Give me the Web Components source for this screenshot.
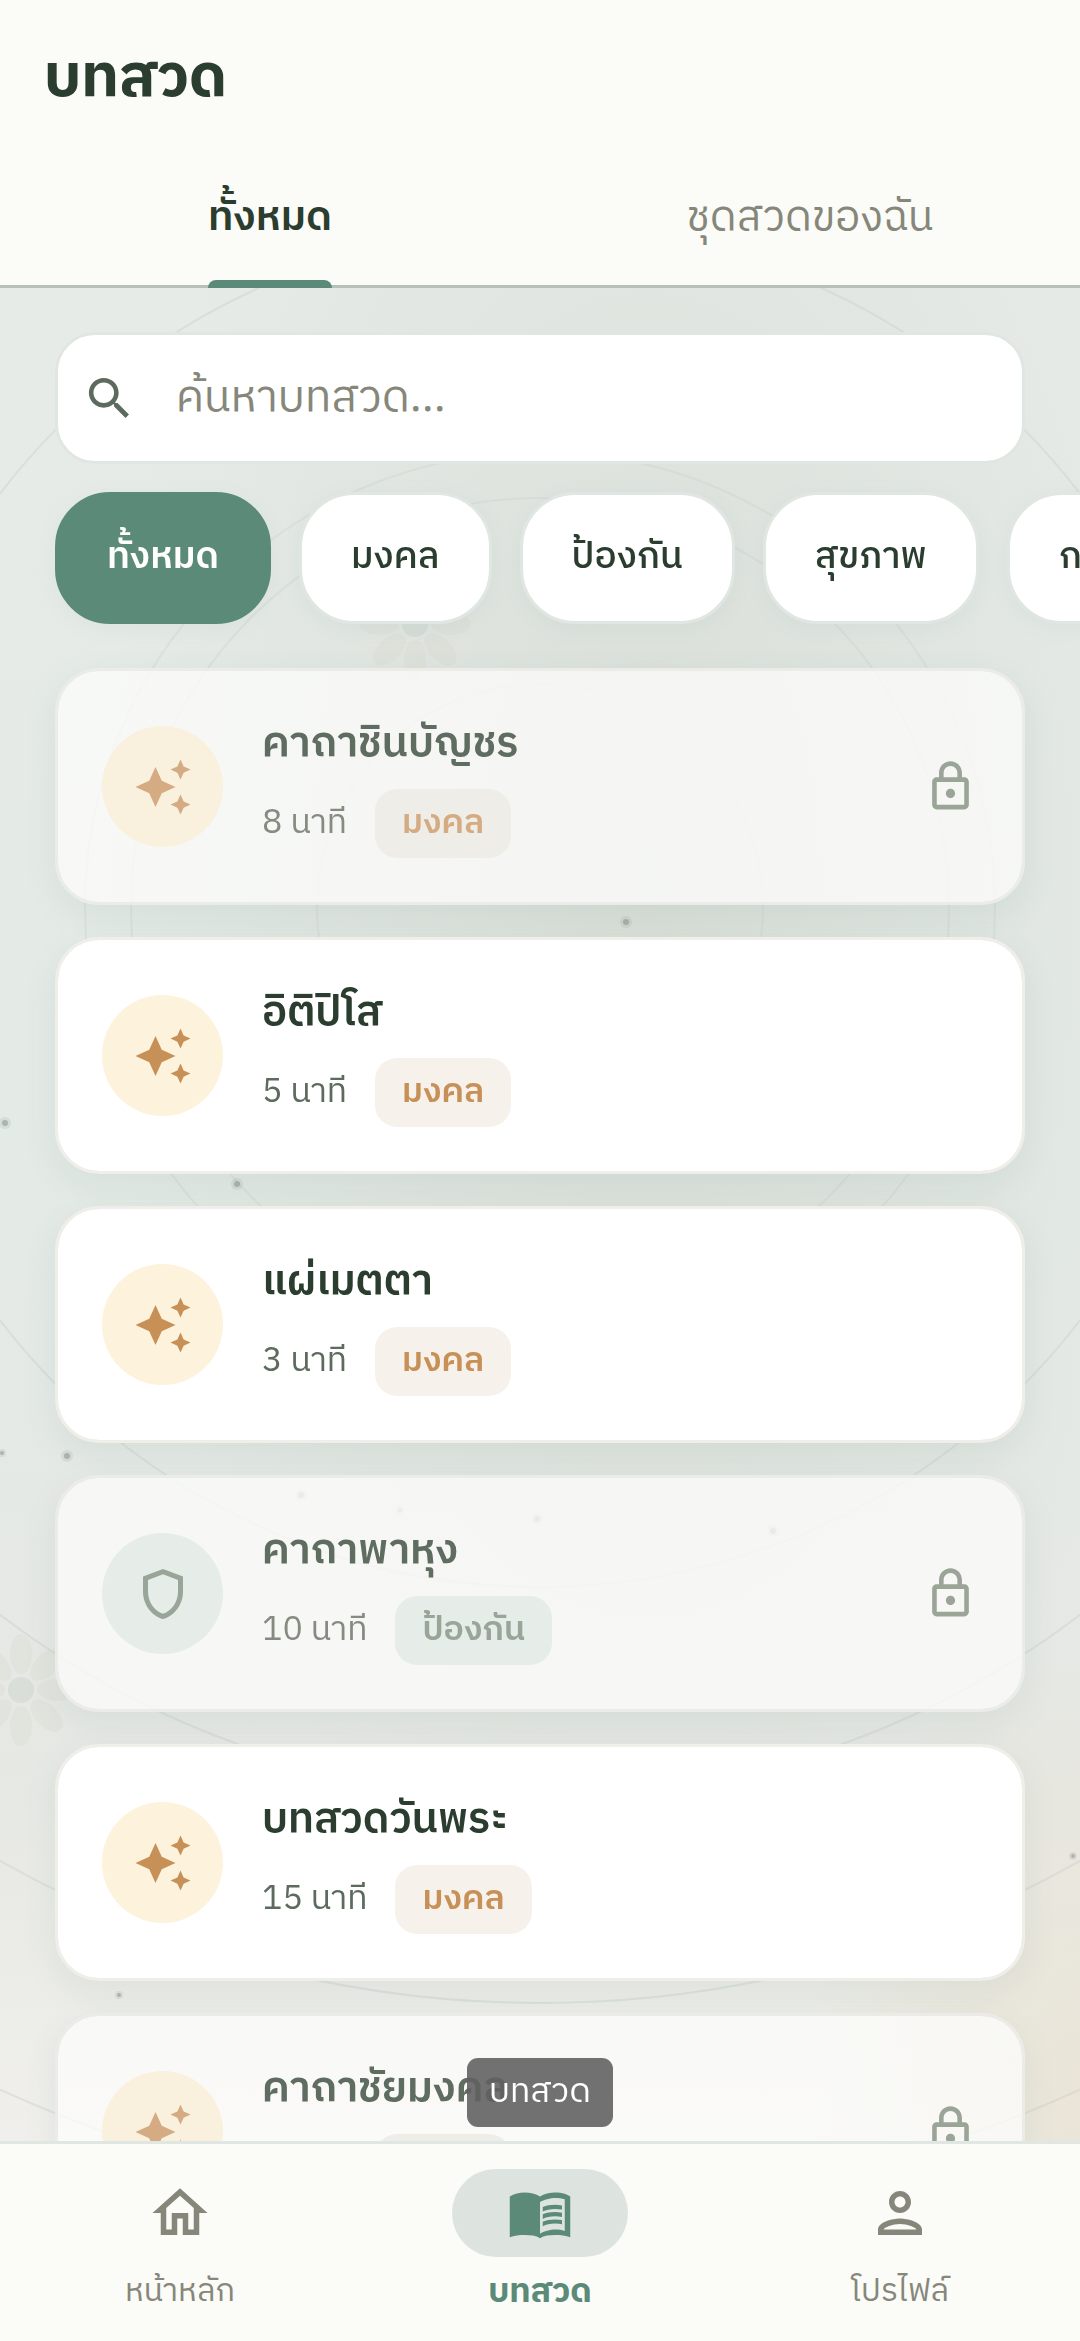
<!DOCTYPE html>
<html lang="th">
<head>
<meta charset="utf-8">
<meta name="viewport" content="width=device-width, initial-scale=1">
<title>บทสวด</title>
<style>
    :root {
        --ink: #2a3d2e;
        --ink-soft: #5c6b5e;
        --muted: #86877a;
        --primary: #5b8b78;
        --primary-soft: #dde4df;
        --surface: #fbfbf7;
        --line: #e0e6e1;
        --gold: #c79057;
        --gold-soft: #fdf2dc;
        --text-sm: 34px;
        --text-md: 37px;
        --text-lg: 42px;
        --space-sm: 28px;
        --space-md: 44px;
        --gutter: 55px;
    }
    body {
        margin: 0;
        color: var(--ink);
        background: var(--surface);
        font-family: "IBM Plex Sans Thai", "Noto Sans Thai", "Noto Sans", sans-serif;
    }
</style>
</head>
<body>
<chant-app>
    <page-header slot="header">บทสวด</page-header>
    <view-tabs slot="header">
        <view-tab selected>ทั้งหมด</view-tab>
        <view-tab>ชุดสวดของฉัน</view-tab>
    </view-tabs>

    <search-field placeholder="ค้นหาบทสวด..."></search-field>
    <chip-row>
        <filter-chip selected>ทั้งหมด</filter-chip>
        <filter-chip>มงคล</filter-chip>
        <filter-chip>ป้องกัน</filter-chip>
        <filter-chip>สุขภาพ</filter-chip>
        <filter-chip>การงาน</filter-chip>
    </chip-row>
    <chant-list>
        <chant-card minutes="8" category="มงคล" locked>คาถาชินบัญชร</chant-card>
        <chant-card minutes="5" category="มงคล">อิติปิโส</chant-card>
        <chant-card minutes="3" category="มงคล">แผ่เมตตา</chant-card>
        <chant-card minutes="10" category="ป้องกัน" kind="shield" locked>คาถาพาหุง</chant-card>
        <chant-card minutes="15" category="มงคล">บทสวดวันพระ</chant-card>
        <chant-card minutes="5" category="มงคล" locked>คาถาชัยมงคล</chant-card>
    </chant-list>

    <bottom-nav slot="nav">
        <nav-item icon="home" href="#home">หน้าหลัก</nav-item>
        <nav-item icon="book" href="#chants" tooltip="บทสวด" selected>บทสวด</nav-item>
        <nav-item icon="person" href="#profile">โปรไฟล์</nav-item>
    </bottom-nav>
</chant-app>

<script>
const ICONS = {
    search: 'M15.5 14h-.79l-.28-.27C15.41 12.59 16 11.11 16 9.5 16 5.91 13.09 3 9.5 3S3 5.91 3 9.5 5.91 16 9.5 16c1.61 0 3.09-.59 4.23-1.57l.27.28v.79l5 4.99L20.49 19l-4.99-5zm-6 0C7.01 14 5 11.99 5 9.5S7.01 5 9.5 5 14 7.01 14 9.5 11.99 14 9.5 14z',
    sparkle: 'M19 9l1.25-2.75L23 5l-2.75-1.25L19 1l-1.25 2.75L15 5l2.75 1.25L19 9zm-7.5.5L9 4 6.5 9.5 1 12l5.5 2.5L9 20l2.5-5.5L17 12l-5.5-2.5zM19 15l-1.25 2.75L15 19l2.75 1.25L19 23l1.25-2.75L23 19l-2.75-1.25L19 15z',
    shield: 'M12 2L4 5v6.09c0 5.05 3.41 9.76 8 10.91 4.59-1.15 8-5.86 8-10.91V5l-8-3zm6 9.09c0 4-2.55 7.7-6 8.83-3.45-1.13-6-4.82-6-8.83v-4.7l6-2.25 6 2.25v4.7z',
    lock: 'M18 8h-1V6c0-2.76-2.24-5-5-5S7 3.24 7 6v2H6c-1.1 0-2 .9-2 2v10c0 1.1.9 2 2 2h12c1.1 0 2-.9 2-2V10c0-1.1-.9-2-2-2zM9 6c0-1.66 1.34-3 3-3s3 1.34 3 3v2H9V6zm9 14H6V10h12v10zm-6-3c1.1 0 2-.9 2-2s-.9-2-2-2-2 .9-2 2 .9 2 2 2z',
    home: 'M12 5.69l5 4.5V18h-2v-6H9v6H7v-7.81l5-4.5M12 3L2 12h3v8h6v-6h2v6h6v-8h3L12 3z',
    book: 'M21 5c-1.11-.35-2.33-.5-3.5-.5-1.95 0-4.05.4-5.5 1.5-1.45-1.1-3.55-1.5-5.5-1.5S2.45 4.9 1 6v14.8C2.6 20.2 4.6 20 6.5 20c1.95 0 4.05.2 5.5 1.2 1.45-1 3.55-1.2 5.5-1.2 1.9 0 3.9.2 5.5.8V6c-.6-.45-1.25-.75-2-1zM21 18.5c-1.1-.35-2.3-.5-3.5-.5-1.7 0-4.15.65-5.5 1.5V8c1.35-.85 3.8-1.5 5.5-1.5 1.2 0 2.4.15 3.5.5v11.5zM17.5 10.5c.88 0 1.73.09 2.5.26V9.24c-.79-.15-1.64-.24-2.5-.24-1.7 0-3.24.29-4.5.83v1.66c1.13-.64 2.7-.99 4.5-.99zM13 12.49v1.66c1.13-.64 2.7-.99 4.5-.99.88 0 1.73.09 2.5.26V11.9c-.79-.15-1.64-.24-2.5-.24-1.7 0-3.24.3-4.5.83zM17.5 14.33c-1.7 0-3.24.29-4.5.83v1.66c1.13-.64 2.7-.99 4.5-.99.88 0 1.73.09 2.5.26v-1.52c-.79-.16-1.64-.24-2.5-.24z',
    person: 'M12 6c1.1 0 2 .9 2 2s-.9 2-2 2-2-.9-2-2 .9-2 2-2m0 10c2.7 0 5.8 1.29 6 2H6c.23-.72 3.31-2 6-2m0-12C9.79 4 8 5.79 8 8s1.79 4 4 4 4-1.79 4-4-1.79-4-4-4zm0 10c-2.67 0-8 1.34-8 4v2h16v-2c0-2.66-5.33-4-8-4z'
};

class AppIcon extends HTMLElement {
    constructor() {
        super();
        this.attachShadow({ mode: 'open' });
    }

    connectedCallback() {
        this.shadowRoot.innerHTML = `
            <style>
                :host {
                    display: block;
                    flex: none;
                    width: var(--icon-size, 55px);
                    height: var(--icon-size, 55px);
                }
                svg {
                    display: block;
                    width: 100%;
                    height: 100%;
                    fill: currentColor;
                }
            </style>
            <svg viewBox="0 0 24 24" aria-hidden="true">
                <path fill-rule="evenodd" d="${ICONS[this.getAttribute('name')]}"/>
            </svg>
        `;
    }
}

class ChantApp extends HTMLElement {
    constructor() {
        super();
        this.attachShadow({ mode: 'open' });
    }

    connectedCallback() {
        this.shadowRoot.innerHTML = `
            <style>
                :host {
                    display: flex;
                    flex-direction: column;
                    height: 100vh;
                    overflow: hidden;
                }
                header {
                    flex: none;
                    background: var(--surface);
                }
                main {
                    position: relative;
                    flex: 1;
                    min-height: 0;
                    overflow: hidden;
                }
                .scroller {
                    position: relative;
                    height: 100%;
                    overflow-y: auto;
                    scrollbar-width: none;
                }
            </style>
            <header><slot name="header"></slot></header>
            <main>
                <mandala-backdrop></mandala-backdrop>
                <div class="scroller"><slot></slot></div>
            </main>
            <slot name="nav"></slot>
        `;
    }
}

class MandalaBackdrop extends HTMLElement {
    constructor() {
        super();
        this.attachShadow({ mode: 'open' });
    }

    flower(x, y) {
        const petals = [0, 45, 90, 135, 180, 225, 270, 315]
            .map(a => `<ellipse cx="0" cy="-36" rx="11" ry="20" transform="rotate(${a})"/>`)
            .join('');
        return `<g transform="translate(${x} ${y})" fill="#d8d9ce" opacity=".3">${petals}<circle r="13" fill="#bcc8c0"/></g>`;
    }

    connectedCallback() {
        // the outer rings are drawn a little stronger than the three inner ones
        const ring = r => `<circle cx="540" cy="619" r="${r}"/>`;
        const dots = [
            [626, 634, 3], [5, 835, 3], [237, 896, 3], [67, 1168, 3], [2, 1165, 2],
            [301, 1207, 3], [400, 1222, 2], [537, 1231, 3], [773, 1243, 3],
            [1073, 1568, 2], [119, 1707, 2]
        ].map(([x, y, r]) => `
            <circle cx="${x}" cy="${y}" r="${r * 2}" opacity=".25"/>
            <circle cx="${x}" cy="${y}" r="${r}"/>
        `).join('');

        this.shadowRoot.innerHTML = `
            <style>
                :host {
                    display: block;
                    position: absolute;
                    inset: 0;
                    background:
                        radial-gradient(ellipse at 100% 98%, rgba(232, 226, 210, .8), transparent 18%),
                        radial-gradient(ellipse at 60% 32%, rgba(216, 221, 214, .9), transparent 60%),
                        linear-gradient(to bottom, #e6ebe8, #e4eae6 50%, #e6e8e4 80%, #f0efeb);
                }
                svg {
                    display: block;
                    width: 100%;
                    height: 100%;
                }
            </style>
            <svg viewBox="0 0 1080 1853" preserveAspectRatio="xMidYMin slice" aria-hidden="true">
                <g fill="none" stroke="#c6cec7" stroke-width="2">
                    <g stroke-opacity=".3">${[223, 409, 455].map(ring).join('')}</g>
                    <g stroke-opacity=".4">${[680, 890, 1096, 1300].map(ring).join('')}</g>
                </g>
                ${this.flower(415, 336)}
                ${this.flower(21, 1402)}
                <g fill="#7d8a81" opacity=".55">${dots}</g>
            </svg>
        `;
    }
}

class PageHeader extends HTMLElement {
    constructor() {
        super();
        this.attachShadow({ mode: 'open' });
    }

    connectedCallback() {
        this.shadowRoot.innerHTML = `
            <style>
                :host {
                    display: block;
                    padding: 33px var(--space-md) 31px;
                }
                h1 {
                    margin: 0;
                    font-size: 60px;
                    line-height: 92px;
                    font-weight: 700;
                }
            </style>
            <h1><slot></slot></h1>
        `;
    }
}

class ViewTabs extends HTMLElement {
    constructor() {
        super();
        this.attachShadow({ mode: 'open' });
    }

    connectedCallback() {
        this.setAttribute('role', 'tablist');
        this.shadowRoot.innerHTML = `
            <style>
                :host {
                    display: grid;
                    grid-auto-flow: column;
                    grid-auto-columns: 1fr;
                    box-shadow: inset 0 -3px #b6c0b8;
                }
            </style>
            <slot></slot>
        `;
    }
}

class ViewTab extends HTMLElement {
    constructor() {
        super();
        this.attachShadow({ mode: 'open' });
    }

    connectedCallback() {
        this.shadowRoot.innerHTML = `
            <style>
                :host {
                    display: flex;
                    justify-content: center;
                }
                button {
                    display: flex;
                    flex-direction: column;
                    height: 132px;
                    padding: 0;
                    border: 0;
                    background: none;
                    color: var(--muted);
                    font: inherit;
                    font-size: var(--text-lg);
                    line-height: 124px;
                }
                button::after {
                    content: "";
                    align-self: stretch;
                    height: 8px;
                    border-radius: 8px 8px 0 0;
                }
                :host([selected]) button {
                    color: var(--ink);
                    font-size: 41px;
                    font-weight: 600;
                }
                :host([selected]) button::after {
                    background: var(--primary);
                }
            </style>
            <button role="tab" aria-selected="${this.hasAttribute('selected')}"><slot></slot></button>
        `;
    }
}

class SearchField extends HTMLElement {
    constructor() {
        super();
        this.attachShadow({ mode: 'open' });
    }

    connectedCallback() {
        const placeholder = this.getAttribute('placeholder');
        this.shadowRoot.innerHTML = `
            <style>
                :host {
                    display: block;
                    padding: var(--space-md) var(--gutter) 0;
                }
                .box {
                    display: flex;
                    align-items: center;
                    gap: 39px;
                    height: 126px;
                    padding: 0 24px;
                    border: 3px solid var(--line);
                    border-radius: 40px;
                    background: #fff;
                }
                label {
                    color: var(--ink-soft);
                }
                input {
                    flex: 1;
                    min-width: 0;
                    height: 80px;
                    padding: 0;
                    border: 0;
                    outline: 0;
                    background: none;
                    color: var(--ink);
                    font: inherit;
                    font-size: 44px;
                }
                input::placeholder {
                    color: var(--muted);
                    opacity: 1;
                }
            </style>
            <div class="box">
                <label for="query" aria-label="${placeholder}"><app-icon name="search"></app-icon></label>
                <input id="query" type="search" placeholder="${placeholder}">
            </div>
        `;
    }
}

class ChipRow extends HTMLElement {
    constructor() {
        super();
        this.attachShadow({ mode: 'open' });
    }

    connectedCallback() {
        this.shadowRoot.innerHTML = `
            <style>
                :host {
                    display: flex;
                    gap: var(--space-sm);
                    padding: var(--space-sm) var(--gutter) var(--space-md);
                    overflow-x: auto;
                    scrollbar-width: none;
                }
            </style>
            <slot></slot>
        `;
    }
}

class FilterChip extends HTMLElement {
    constructor() {
        super();
        this.attachShadow({ mode: 'open' });
    }

    connectedCallback() {
        this.shadowRoot.innerHTML = `
            <style>
                :host {
                    display: block;
                    flex: none;
                }
                button {
                    display: block;
                    height: 132px;
                    padding: 0 49px;
                    border: 3px solid var(--line);
                    border-radius: 55px;
                    background: #fff;
                    box-shadow: 0 4px 22px rgba(91, 139, 120, .06);
                    color: var(--ink);
                    font: inherit;
                    font-size: var(--text-md);
                    font-weight: 500;
                    line-height: 120px;
                    white-space: nowrap;
                }
                :host([selected]) button {
                    border-color: var(--primary);
                    background: var(--primary);
                    color: #fff;
                    font-weight: 600;
                }
            </style>
            <button aria-pressed="${this.hasAttribute('selected')}"><slot></slot></button>
        `;
    }
}

class ChantList extends HTMLElement {
    constructor() {
        super();
        this.attachShadow({ mode: 'open' });
    }

    connectedCallback() {
        this.shadowRoot.innerHTML = `
            <style>
                :host {
                    display: flex;
                    flex-direction: column;
                    gap: 32px;
                    padding: 0 var(--gutter) var(--space-md);
                }
            </style>
            <slot></slot>
        `;
    }
}

class ChantCard extends HTMLElement {
    constructor() {
        super();
        this.attachShadow({ mode: 'open' });
    }

    connectedCallback() {
        const kind = this.getAttribute('kind') || 'sparkle';
        const lock = this.hasAttribute('locked') ? '<app-icon class="lock" name="lock"></app-icon>' : '';
        this.shadowRoot.innerHTML = `
            <style>
                :host {
                    --title: var(--ink);
                    --meta: var(--ink-soft);
                    --accent: var(--gold);
                    --accent-soft: var(--gold-soft);
                    --badge: #f7f1ec;
                    display: block;
                    border: 3px solid #f0eee9;
                    border-radius: 44px;
                    background: #fff;
                    background-clip: padding-box;
                    box-shadow: 0 11px 33px rgba(91, 139, 120, .1);
                }
                :host([locked]) {
                    --title: #5f6c60;
                    --meta: #868b80;
                    --accent: #d4ab82;
                    --accent-soft: #f9f0dd;
                    --badge: #efede8;
                    border-color: #ebece7;
                    background-color: rgba(252, 252, 251, .77);
                }
                :host([kind="shield"]) {
                    --accent: #98a598;
                    --accent-soft: #e6ece8;
                    --badge: #e6ece8;
                }
                article {
                    display: flex;
                    align-items: center;
                    gap: 39px;
                    padding: var(--space-md);
                }
                .disc {
                    --icon-size: 60px;
                    display: grid;
                    place-items: center;
                    flex: none;
                    width: 121px;
                    height: 121px;
                    border-radius: 50%;
                    background: var(--accent-soft);
                    color: var(--accent);
                }
                .text {
                    flex: 1;
                    min-width: 0;
                }
                h2 {
                    margin: 0 0 16px;
                    color: var(--title);
                    font-size: var(--text-lg);
                    line-height: 58px;
                    font-weight: 600;
                }
                .meta {
                    display: flex;
                    align-items: center;
                    gap: var(--space-sm);
                    font-size: var(--text-sm);
                    line-height: 69px;
                    color: var(--meta);
                }
                .badge {
                    padding: 0 27px;
                    border-radius: 22px;
                    background: var(--badge);
                    color: var(--accent);
                    font-weight: 600;
                }
                .lock {
                    color: #9aa598;
                }
            </style>
            <article>
                <div class="disc"><app-icon name="${kind}"></app-icon></div>
                <div class="text">
                    <h2><slot></slot></h2>
                    <div class="meta">
                        <span>${this.getAttribute('minutes')} นาที</span>
                        <span class="badge">${this.getAttribute('category')}</span>
                    </div>
                </div>
                ${lock}
            </article>
        `;
    }
}

class BottomNav extends HTMLElement {
    constructor() {
        super();
        this.attachShadow({ mode: 'open' });
    }

    connectedCallback() {
        this.shadowRoot.innerHTML = `
            <style>
                :host {
                    display: block;
                    flex: none;
                    position: relative;
                    border-top: 3px solid var(--line);
                    background: var(--surface);
                }
                nav {
                    display: grid;
                    grid-template-columns: repeat(3, 1fr);
                    padding: 25px 0 24px;
                }
            </style>
            <nav><slot></slot></nav>
        `;
    }
}

class NavItem extends HTMLElement {
    constructor() {
        super();
        this.attachShadow({ mode: 'open' });
    }

    connectedCallback() {
        const tooltip = this.getAttribute('tooltip');
        this.shadowRoot.innerHTML = `
            <style>
                :host {
                    display: block;
                    position: relative;
                }
                a {
                    --icon-size: 66px;
                    display: flex;
                    flex-direction: column;
                    align-items: center;
                    gap: 10px;
                    color: var(--muted);
                    font-size: 32px;
                    line-height: 50px;
                    text-decoration: none;
                }
                .pill {
                    padding: 11px 55px;
                    border-radius: 44px;
                }
                :host([selected]) a {
                    color: var(--primary);
                    font-size: var(--text-sm);
                    font-weight: 700;
                }
                :host([selected]) .pill {
                    background: var(--primary-soft);
                }
                .tooltip {
                    position: absolute;
                    bottom: calc(100% + 42px);
                    left: 50%;
                    transform: translateX(-50%);
                    padding: 0 22px;
                    border-radius: 11px;
                    background: rgba(97, 98, 96, .9);
                    color: #fff;
                    font-size: var(--text-sm);
                    line-height: 69px;
                    white-space: nowrap;
                }
            </style>
            <a href="${this.getAttribute('href')}">
                <span class="pill"><app-icon name="${this.getAttribute('icon')}"></app-icon></span>
                <span><slot></slot></span>
            </a>
            ${tooltip ? `<span class="tooltip" role="tooltip">${tooltip}</span>` : ''}
        `;
    }
}

customElements.define('app-icon', AppIcon);
customElements.define('mandala-backdrop', MandalaBackdrop);
customElements.define('page-header', PageHeader);
customElements.define('view-tabs', ViewTabs);
customElements.define('view-tab', ViewTab);
customElements.define('search-field', SearchField);
customElements.define('chip-row', ChipRow);
customElements.define('filter-chip', FilterChip);
customElements.define('chant-list', ChantList);
customElements.define('chant-card', ChantCard);
customElements.define('bottom-nav', BottomNav);
customElements.define('nav-item', NavItem);
customElements.define('chant-app', ChantApp);
</script>
</body>
</html>
